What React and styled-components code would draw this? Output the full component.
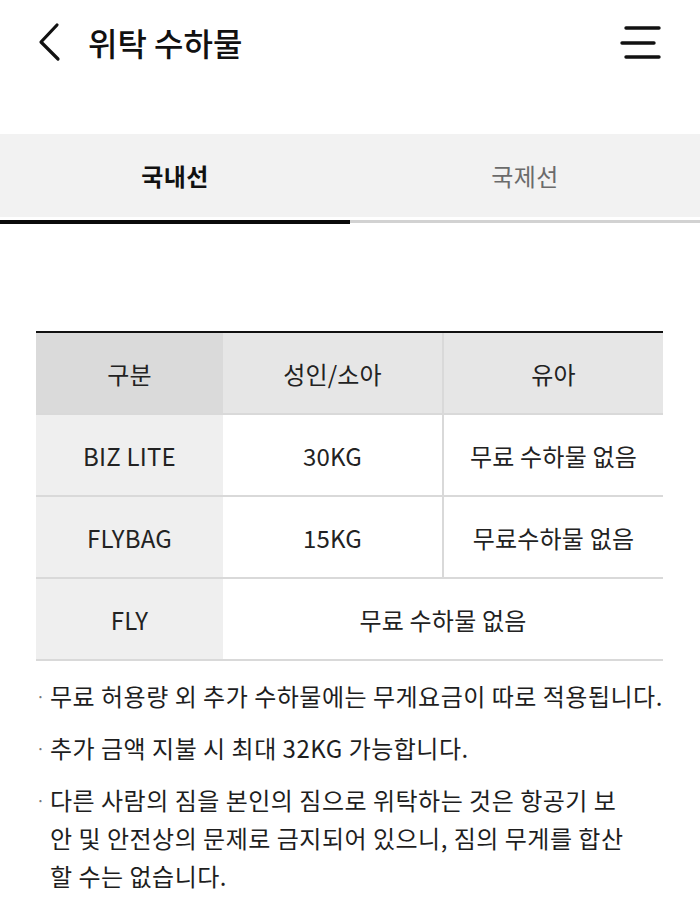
import React from "react";
import styled, { createGlobalStyle } from "styled-components";

const GlobalStyle = createGlobalStyle`
  html, body { margin: 0; padding: 0; background: #fff; }
  body {
    font-family: "Noto Sans CJK KR", "Noto Sans", sans-serif;
    color: #1a1a1a;
    -webkit-font-smoothing: antialiased;
  }
`;

const Page = styled.div`
  width: 700px;
  min-height: 911px;
  background: #fff;
`;

const Header = styled.header`
  height: 84px;
  display: flex;
  align-items: center;
  justify-content: space-between;
  padding: 0 36px 0 36px;
  box-sizing: border-box;
`;

const HeaderLeft = styled.div`
  display: flex;
  align-items: center;
  gap: 26px;
`;

const IconButton = styled.button`
  border: 0;
  background: none;
  padding: 0;
  display: flex;
  align-items: center;
  justify-content: center;
  cursor: pointer;
`;

const Title = styled.h1`
  margin: 0;
  font-size: 32px;
  font-weight: 500;
  letter-spacing: 0;
  color: #111;
`;

const TabBar = styled.nav`
  display: flex;
  margin-top: 50px;
`;

const Tab = styled.div`
  flex: 1;
  display: flex;
  flex-direction: column;
`;

const TabLabel = styled.div`
  height: 83px;
  background: #f2f2f2;
  display: flex;
  align-items: center;
  justify-content: center;
  font-size: 24px;
  letter-spacing: 0.5px;
  font-weight: ${(p) => (p.$active ? 700 : 400)};
  color: ${(p) => (p.$active ? "#111" : "#6b6b6b")};
`;

const Indicator = styled.div`
  margin-top: 3px;
  height: ${(p) => (p.$active ? "4px" : "3px")};
  background: ${(p) => (p.$active ? "#0a0a0a" : "#d2d2d2")};
`;

const Table = styled.table`
  margin: 107px 0 0 36px;
  width: 627px;
  table-layout: fixed;
  border-collapse: separate;
  border-spacing: 0;
  border-top: 2px solid #111;
  font-size: 24px;
  color: #222;
`;

const Cell = styled.td`
  height: 80px;
  padding: 0;
  text-align: center;
  vertical-align: middle;
  font-weight: 400;
  border-bottom: 2px solid #d9d9d9;
  border-right: ${(p) => (p.$divider ? "2px solid #d9d9d9" : "0")};
  background: ${(p) =>
    p.$head ? (p.$first ? "#dadada" : "#e6e6e6") : p.$first ? "#efefef" : "#fff"};
  letter-spacing: 0.2px;
`;

const Notes = styled.ul`
  list-style: none;
  margin: 16px 0 0 36px;
  padding: 0;
  display: flex;
  flex-direction: column;
  gap: 14px;
  width: 650px;
`;

const Note = styled.li`
  display: flex;
  font-size: 24px;
  line-height: 38px;
  color: #1e1e1e;
  letter-spacing: 0.5px;
  white-space: nowrap;
`;

const Bullet = styled.span`
  width: 14px;
  flex: none;
  color: #777;
  font-size: 16px;
`;

const rows = [
  { name: "BIZ LITE", adult: "30KG", infant: "무료 수하물 없음" },
  { name: "FLYBAG", adult: "15KG", infant: "무료수하물 없음" },
];

export default function App() {
  return (
    <Page>
      <GlobalStyle />
      <Header>
        <HeaderLeft>
          <IconButton aria-label="뒤로">
            <svg width="26" height="40" viewBox="0 0 26 40">
              <path d="M21 7 L5 24 L22 41" transform="translate(0,-4)" fill="none" stroke="#111" strokeWidth="3.2" strokeLinecap="round" strokeLinejoin="round" />
            </svg>
          </IconButton>
          <Title>위탁 수하물</Title>
        </HeaderLeft>
        <IconButton aria-label="메뉴">
          <svg width="44" height="36" viewBox="0 0 44 36">
            <path d="M6 4 H39 M2 19 H34 M6 33 H39" fill="none" stroke="#111" strokeWidth="3.4" strokeLinecap="round" />
          </svg>
        </IconButton>
      </Header>

      <TabBar>
        <Tab>
          <TabLabel $active>국내선</TabLabel>
          <Indicator $active />
        </Tab>
        <Tab>
          <TabLabel>국제선</TabLabel>
          <Indicator />
        </Tab>
      </TabBar>

      <Table>
        <colgroup>
          <col style={{ width: 187 }} />
          <col style={{ width: 221 }} />
          <col style={{ width: 219 }} />
        </colgroup>
        <thead>
          <tr>
            <Cell as="th" $head $first>구분</Cell>
            <Cell as="th" $head $divider>성인/소아</Cell>
            <Cell as="th" $head>유아</Cell>
          </tr>
        </thead>
        <tbody>
          {rows.map((r) => (
            <tr key={r.name}>
              <Cell $first>{r.name}</Cell>
              <Cell $divider>{r.adult}</Cell>
              <Cell>{r.infant}</Cell>
            </tr>
          ))}
          <tr>
            <Cell $first>FLY</Cell>
            <Cell colSpan={2}>무료 수하물 없음</Cell>
          </tr>
        </tbody>
      </Table>

      <Notes>
        <Note>
          <Bullet>·</Bullet>
          <span>무료 허용량 외 추가 수하물에는 무게요금이 따로 적용됩니다.</span>
        </Note>
        <Note>
          <Bullet>·</Bullet>
          <span>추가 금액 지불 시 최대 32KG 가능합니다.</span>
        </Note>
        <Note>
          <Bullet>·</Bullet>
          <span>
            다른 사람의 짐을 본인의 짐으로 위탁하는 것은 항공기 보
            <br />
            안 및 안전상의 문제로 금지되어 있으니, 짐의 무게를 합산
            <br />
            할 수는 없습니다.
          </span>
        </Note>
      </Notes>
    </Page>
  );
}
